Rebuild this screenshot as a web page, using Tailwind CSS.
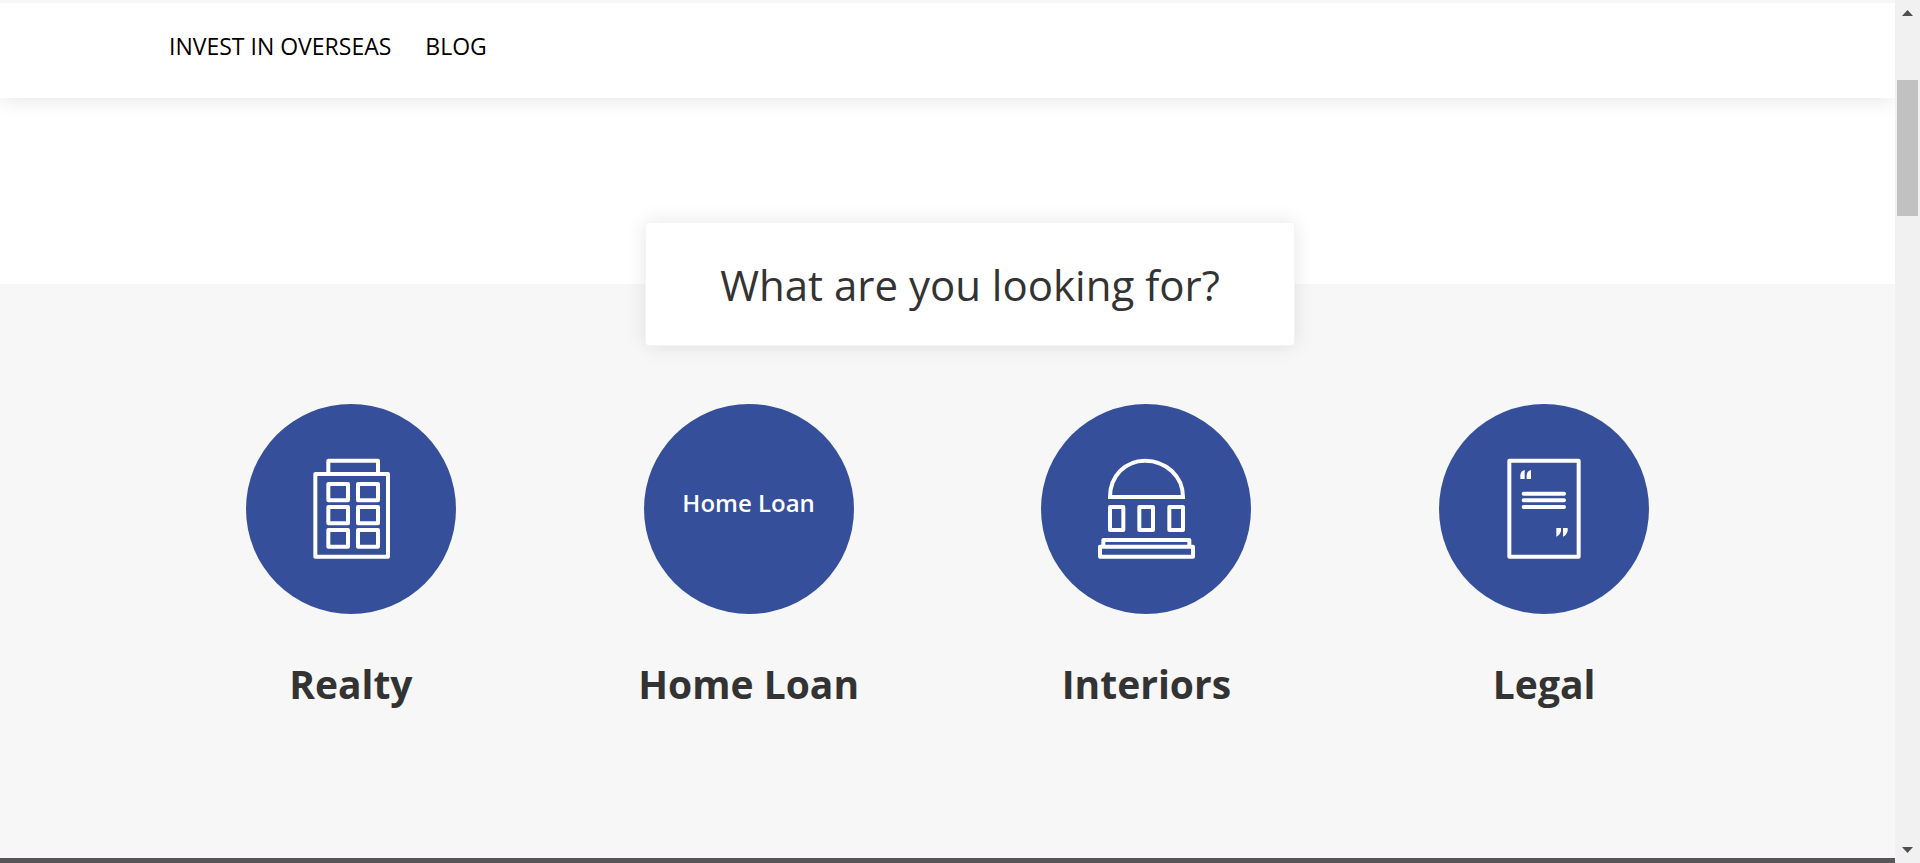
<!DOCTYPE html>
<html lang="en">
<head>
<meta charset="utf-8">
<meta name="viewport" content="width=device-width, initial-scale=1">
<title>What are you looking for?</title>
<script src="https://cdn.jsdelivr.net/npm/@tailwindcss/browser@4"></script>
</head>
<body class="flex h-screen overflow-hidden bg-white font-['Open_Sans',sans-serif] text-[#333]">
  <div class="flex min-w-0 flex-1 flex-col overflow-hidden">
    <header class="relative border-t-3 border-[#f7f7f7] bg-white shadow-[0_2px_20px_rgba(0,0,0,0.1)]">
      <nav class="flex h-[95px] items-start gap-[34px] px-[169px] pt-[25px] text-[23px] leading-9 font-medium text-black">
        <a href="#overseas">INVEST IN OVERSEAS</a>
        <a href="#blog">BLOG</a>
      </nav>
    </header>

    <div class="h-[186px] shrink-0"></div>

    <main class="flex-1 bg-[#f7f7f7] px-[152px]">
      <div class="-mt-[62px] flex justify-center pl-[45px]">
        <h1 class="relative flex h-[124px] w-[650px] items-center justify-center rounded-sm border border-[#f4f4f4] bg-white pt-[2px] text-[42px] leading-none shadow-[0_0_20px_rgba(0,0,0,0.1)]">What are you looking for?</h1>
      </div>

      <div class="mt-[58px] grid grid-cols-4 text-center text-[39px] leading-[56px] font-bold">
        <a href="#realty" class="flex flex-col items-center gap-[42px]">
          <svg class="size-[210px] rounded-full bg-[#354f9a]" viewBox="30 30 630 630" fill="none" stroke="#fff" stroke-width="12" stroke-linejoin="round" aria-hidden="true">
            <path d="M277 240V200H426V240M238 240H456V488H238Z"/>
            <path d="M277 270H336V319H277ZM366 270H426V319H366ZM277 339H336V388H277ZM366 339H426V388H366ZM277 408H336V458H277ZM366 408H426V458H366Z"/>
          </svg>
          <h2>Realty</h2>
        </a>
        <a href="#home-loan" class="flex flex-col items-center gap-[42px]">
          <span class="flex size-[210px] items-center justify-center rounded-full bg-[#354f9a] pb-3 text-2xl font-semibold text-white">Home Loan</span>
          <h2>Home Loan</h2>
        </a>
        <a href="#interiors" class="flex flex-col items-center gap-[42px]">
          <svg class="size-[210px] rounded-full bg-[#354f9a]" viewBox="33 30 630 630" fill="none" stroke="#fff" stroke-width="12" stroke-linejoin="round" aria-hidden="true">
            <path stroke-linejoin="miter" d="M240 309C240 246 286 200 345 200C407 200 459 246 459 309Z"/>
            <path d="M240 339H280V408H240ZM328 339H369V408H328ZM418 339H459V408H418ZM220 458V438H478V458M210 458H489V488H210Z"/>
          </svg>
          <h2>Interiors</h2>
        </a>
        <a href="#legal" class="flex flex-col items-center gap-[42px]">
          <svg class="size-[210px] rounded-full bg-[#354f9a]" viewBox="27 30 630 630" fill="none" stroke="#fff" stroke-width="12" stroke-linejoin="round" stroke-linecap="round" aria-hidden="true">
            <path d="M238 200H446V488H238ZM281 299H402M281 319H402M281 339H402"/>
            <path fill="#fff" stroke="none" d="M271 255V244Q272 231 284 228V255ZM290 255V244Q291 231 303 228V255ZM379 402H393V411Q390 423 379 428ZM399 402H413V411Q410 423 399 428Z"/>
          </svg>
          <h2>Legal</h2>
        </a>
      </div>
    </main>

    <footer class="h-[5px] shrink-0 bg-[#585658]"></footer>
  </div>

  <div class="flex w-[25px] shrink-0 flex-col items-center bg-[#f1f1f1]" aria-hidden="true">
    <svg class="mt-[10px] h-[6px] w-[11px]" viewBox="0 0 11 6" fill="#505050"><path d="M0 6L5.500 0L11 6Z"/></svg>
    <div class="mt-16 h-[136px] w-[21px] bg-[#c1c1c1]"></div>
    <svg class="mt-auto mb-[10px] h-[6px] w-[11px]" viewBox="0 0 11 6" fill="#505050"><path d="M0 0L5.500 6L11 0Z"/></svg>
  </div>
</body>
</html>
